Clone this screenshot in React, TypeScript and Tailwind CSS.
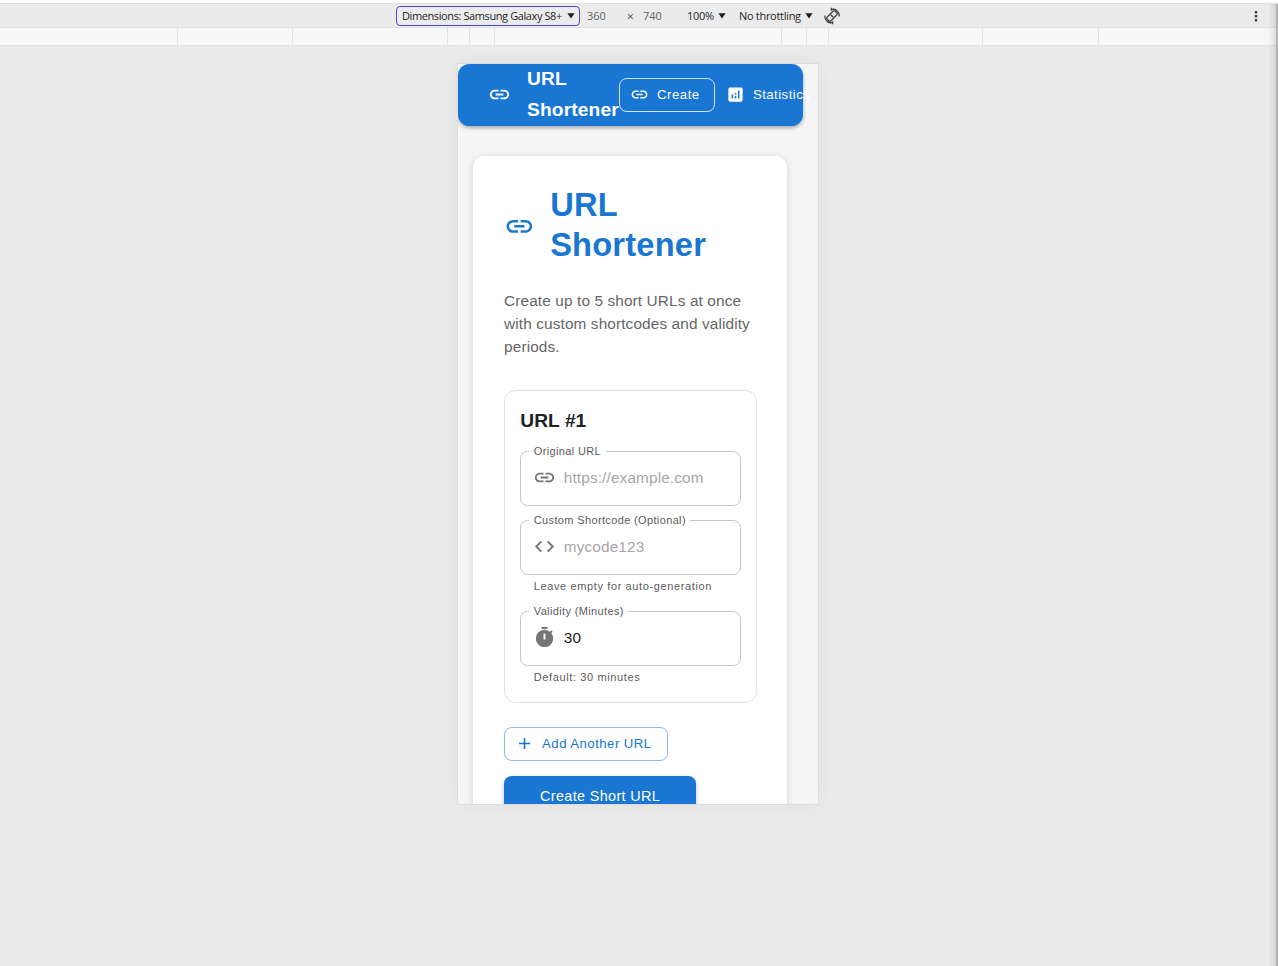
import type { ReactNode } from "react";
import { MdAdd, MdAnalytics, MdCode, MdLink, MdTimer } from "react-icons/md";

function Caret() {
  return (
    <svg className="h-[6px] w-[8px] shrink-0" viewBox="0 0 8 6">
      <path d="M0.4 0.3h7.2L4 5.6z" fill="#1f1f1f" />
    </svg>
  );
}

function RotateIcon() {
  return (
    <svg className="size-[18px] shrink-0" viewBox="0 0 18 18" fill="none" stroke="#474747" strokeWidth="1.3">
      <rect x="6.4" y="3.4" width="5.2" height="11.2" rx="1.2" transform="rotate(45 9 9)" />
      <path d="M7.8 2.3h5M10 2a7 7 0 0 1 6.2 7.5M8.4 0.8v3M1.8 8.5a7 7 0 0 0 6.2 7.5M5.2 15.7h5M9.6 14.2v3" />
      <path d="M7.7 7.7l2.6 2.6" />
    </svg>
  );
}

function Toolbar() {
  return (
    <div className="flex h-[24px] items-center border-t border-[#dddfe2] bg-[#ebebeb] font-['Open_Sans','Noto_Sans',sans-serif] text-[11px] whitespace-nowrap text-[#1f1f1f]">
      <div className="ml-[396px] flex h-[20px] w-[184px] items-center justify-between rounded-[4px] border border-[#4b46dc] pr-[4px] pl-[5px]">
        <span className="pt-[1px] tracking-[-0.4px]">Dimensions: Samsung Galaxy S8+</span>
        <Caret />
      </div>
      <span className="ml-[7px] w-[40px] pt-[1px] tracking-[-0.1px] text-[#5f6368]">360</span>
      <span className="w-[16px] pt-[2px] text-[12px] text-[#444746]">×</span>
      <span className="w-[44px] pt-[1px] tracking-[-0.1px] text-[#5f6368]">740</span>
      <div className="flex w-[52px] items-center gap-[4px]">
        <span className="w-[27px] pt-[1px] tracking-[-0.25px]">100%</span>
        <Caret />
      </div>
      <div className="flex w-[84px] items-center gap-[4px]">
        <span className="w-[62px] pt-[1px] tracking-[-0.3px]">No throttling</span>
        <Caret />
      </div>
      <RotateIcon />
      <svg className="mr-[20px] ml-auto h-[12px] w-[4px]" viewBox="0 0 4 12" fill="#3c3c3c">
        <rect x="0.8" y="1" width="2.4" height="2.4" rx="0.6" />
        <rect x="0.8" y="5" width="2.4" height="2.4" rx="0.6" />
        <rect x="0.8" y="9" width="2.4" height="2.4" rx="0.6" />
      </svg>
    </div>
  );
}

const rulerSegments = [178, 115, 155, 22, 25, 287, 25, 22, 154, 116];

function Ruler() {
  return (
    <div className="flex h-[19px] border-y border-[#e1e2e5] bg-[#f7f7f7]">
      {rulerSegments.map((w, i) => (
        <div key={i} className="shrink-0 border-r border-[#e1e2e5]" style={{ width: w }} />
      ))}
    </div>
  );
}

function Field({ label, icon, text, filled, helper }: { label: string; icon: ReactNode; text: string; filled?: boolean; helper?: string }) {
  return (
    <div>
      <fieldset className="h-[59.5px] w-full rounded-[7.7px] border border-[#c4c4c4] px-[8px]">
        <legend className="h-[11px] px-[4.5px] text-[11px] leading-[10px] tracking-[0.36px] whitespace-nowrap text-[#5c5c5c]">{label}</legend>
        <div className="flex h-[41px] items-center gap-[7.5px] pl-[4px]">
          <span className="text-[23px] text-[#757575]">{icon}</span>
          <span className={filled ? "text-[15.36px] tracking-[0.144px] text-[#212121]" : "text-[15.36px] tracking-[0.13px] text-[#a6a6a6]"}>{text}</span>
        </div>
      </fieldset>
      {helper && <p className="mt-[2px] mb-[1px] pl-[13.5px] text-[11px] leading-[19px] tracking-[0.62px] whitespace-nowrap text-[#5c5c5c]">{helper}</p>}
    </div>
  );
}

function AppBar() {
  return (
    <header className="flex h-[61.5px] w-[345px] items-center rounded-[11.5px] bg-[#1976d2] pl-[30.2px] text-white shadow-[0_2px_4px_-1px_rgba(0,0,0,0.3),0_2px_4px_rgba(0,0,0,0.12)]">
      <MdLink className="size-[23px] shrink-0" />
      <div className="ml-[15.8px] w-[92px] shrink-0 text-[19.2px] leading-[30.7px] font-bold tracking-[0.144px]">URL Shortener</div>
      <button className="flex h-[34.5px] w-[96px] shrink-0 items-center gap-[7.7px] rounded-[7.7px] border border-white/80 pl-[10.4px] text-[13.2px] tracking-[0.5px]">
        <MdLink className="size-[19px]" />
        Create
      </button>
      <button className="ml-[11.3px] flex shrink-0 items-center gap-[7.7px] text-[13.2px] tracking-[0.45px]">
        <MdAnalytics className="size-[19px]" />
        Statistics
      </button>
    </header>
  );
}

function Device() {
  return (
    <div className="mt-[17px] ml-[457px] h-[742px] w-[362px] overflow-hidden border border-[#dcdcdc] bg-[#f5f5f5] shadow-[0_0_24px_rgba(0,0,0,0.05)]">
      <AppBar />
      <main className="mt-[30px] ml-[15.4px] h-[800px] w-[314px] rounded-[11.5px] bg-white px-[30.7px] pt-[29.5px] shadow-[0_1px_7px_rgba(0,0,0,0.15)]">
        <div className="flex h-[80.6px] items-center text-[#1976d2]">
          <MdLink className="mt-[2px] size-[30.7px] shrink-0" />
          <h1 className="ml-[15.4px] text-[32.64px] leading-[40.3px] font-bold tracking-[0.2px]">URL<br />Shortener</h1>
        </div>
        <p className="mt-[23px] text-[15.36px] leading-[23.04px] tracking-[0.12px] text-[#666666]">
          Create up to 5 short URLs at once with custom shortcodes and validity periods.
        </p>
        <section className="mt-[32px] h-[313.5px] rounded-[11.5px] border border-[#e0e0e0] px-[15.2px] pt-[15.4px]">
          <h2 className="text-[19.2px] leading-[30.7px] font-bold tracking-[0.05px] text-[#212121]">URL #1</h2>
          <div className="mt-[9.5px] flex flex-col gap-[9.4px]">
            <Field label="Original URL" icon={<MdLink />} text="https://example.com" />
            <Field label="Custom Shortcode (Optional)" icon={<MdCode />} text="mycode123" helper="Leave empty for auto-generation" />
            <Field label="Validity (Minutes)" icon={<MdTimer />} text="30" filled helper="Default: 30 minutes" />
          </div>
        </section>
        <button className="mt-[23.3px] flex h-[34.5px] w-[164px] items-center gap-[8px] rounded-[7.7px] border border-[#8cbae8] pl-[10px] text-[13.2px] tracking-[0.46px] whitespace-nowrap text-[#1976d2]">
          <MdAdd className="size-[19px]" />
          <span className="pt-[1px]">Add Another URL</span>
        </button>
        <button className="mt-[15.4px] flex h-[40px] w-[192px] items-center justify-center rounded-[7.7px] bg-[#1976d2] text-[14.4px] tracking-[0.36px] whitespace-nowrap text-white shadow-[0_2px_4px_rgba(0,0,0,0.25)]">
          Create Short URL
        </button>
      </main>
    </div>
  );
}

export default function App() {
  return (
    <div className="relative h-[966px] w-[1278px] overflow-hidden bg-[#ebebeb] font-['Liberation_Sans',Arial,sans-serif]">
      <div className="h-[3px] bg-white" />
      <Toolbar />
      <Ruler />
      <Device />
      <div className="absolute top-[4px] right-0 h-[962px] w-[10px] border-r-2 border-[#b4b4b4] bg-linear-to-r from-transparent to-black/10" />
    </div>
  );
}
